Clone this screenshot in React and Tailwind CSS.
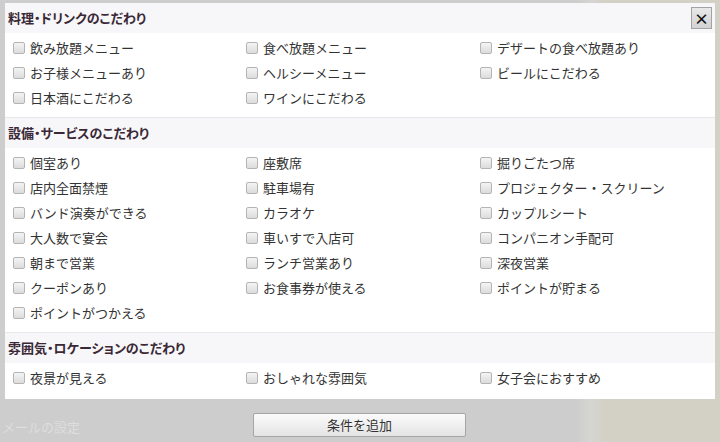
const SECTIONS = [
  {
    title: '料理・ドリンクのこだわり',
    items: [
      '飲み放題メニュー', '食べ放題メニュー', 'デザートの食べ放題あり',
      'お子様メニューあり', 'ヘルシーメニュー', 'ビールにこだわる',
      '日本酒にこだわる', 'ワインにこだわる',
    ],
  },
  {
    title: '設備・サービスのこだわり',
    items: [
      '個室あり', '座敷席', '掘りごたつ席',
      '店内全面禁煙', '駐車場有', 'プロジェクター・スクリーン',
      'バンド演奏ができる', 'カラオケ', 'カップルシート',
      '大人数で宴会', '車いすで入店可', 'コンパニオン手配可',
      '朝まで営業', 'ランチ営業あり', '深夜営業',
      'クーポンあり', 'お食事券が使える', 'ポイントが貯まる',
      'ポイントがつかえる',
    ],
  },
  {
    title: '雰囲気・ロケーションのこだわり',
    items: ['夜景が見える', 'おしゃれな雰囲気', '女子会におすすめ'],
  },
]

const FONT = 'font-["Noto_Sans_CJK_JP","Noto_Sans",sans-serif]'

function Check({ label }) {
  return (
    <label className="flex h-[25px] items-center gap-[5px] text-[13px] text-[#333]">
      <span className="h-[12px] w-[12px] shrink-0 rounded-[2px] border border-[#b4b4b4] bg-gradient-to-b from-[#f4f4f4] to-[#dcdcdc]" />
      <span className="leading-none">{label}</span>
    </label>
  )
}

function Section({ title, items, first, last }) {
  return (
    <div className={first ? '' : 'border-t border-[#e8e8ea]'}>
      <div className="flex h-[30px] items-center justify-between bg-[#f7f7f9] pl-[3px] pr-[3px]">
        <span className="text-[13px] font-bold text-[#3a2836] [font-feature-settings:'palt']">{title}</span>
        {first && (
          <button className="flex h-[22px] w-[21px] items-center justify-center border border-[#a3a3a3] bg-gradient-to-b from-[#e8e8e8] to-[#d2d2d2] text-[15px] font-bold leading-none text-[#111]">
            ×
          </button>
        )}
      </div>
      <div className={`grid grid-cols-[233px_234px_1fr] pl-[8px] pt-[2px] ${last ? 'pb-[9px]' : 'pb-[7px]'}`}>
        {items.map((it) => (
          <Check key={it} label={it} />
        ))}
      </div>
    </div>
  )
}

export default function App() {
  return (
    <div className={`${FONT} h-[442px] w-[720px] overflow-hidden bg-[linear-gradient(to_right,#cdcdcd_0,#cdcdcd_80%,#d5d5d2_82%,#d3d0c5_84%,#d3d0c5_100%)]`}>
      <div className="px-[5px] pt-[3px]">
        <div className="w-[710px] bg-white">
          {SECTIONS.map((s, i) => (
            <Section key={s.title} {...s} first={i === 0} last={i === SECTIONS.length - 1} />
          ))}
        </div>
      </div>
      <div className="flex items-center pt-[14px]">
        <span className="w-[253px] pl-[2px] pt-[4px] text-[13px] text-[#dedede]">メールの設定</span>
        <button className="flex h-[24px] w-[213px] items-center justify-center rounded-[2px] border border-[#a6a6a6] bg-gradient-to-b from-[#fbfbfb] to-[#e4e4e4] text-[13px] text-[#333]">
          条件を追加
        </button>
      </div>
    </div>
  )
}
